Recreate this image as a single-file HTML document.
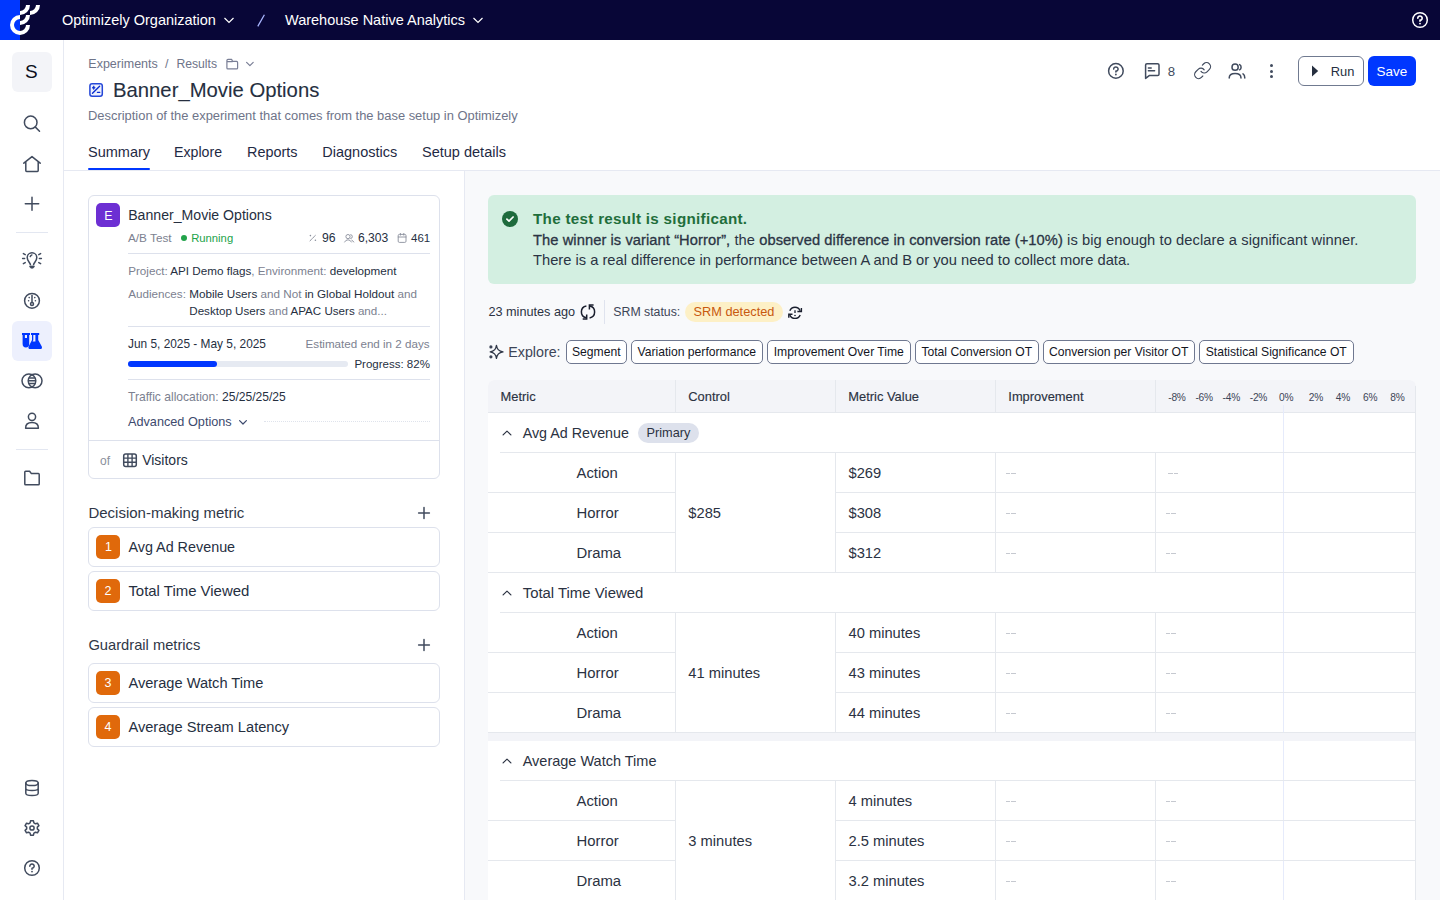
<!DOCTYPE html>
<html><head><meta charset="utf-8">
<style>
*{box-sizing:border-box;margin:0;padding:0}
html,body{width:1440px;height:900px;overflow:hidden;background:#fff}
body{font-family:"Liberation Sans",sans-serif;color:#262f3f;position:relative}
.a{position:absolute}
.nw{white-space:nowrap}
svg{display:block;overflow:visible}
.i{stroke:#414b5e;stroke-width:1.5;fill:none;stroke-linecap:round;stroke-linejoin:round}
</style></head><body>
<div class="a" style="left:465px;top:171px;width:975px;height:729px;background:#f8f9fb"></div>
<div class="a" style="left:64px;top:170px;width:1376px;height:1px;background:#e6e9f2"></div>
<div class="a" style="left:464px;top:171px;width:1px;height:729px;background:#e6e9f2"></div>
<div class="a" style="left:63px;top:40px;width:1px;height:860px;background:#e6e9f2"></div>
<div class="a" style="left:0px;top:0px;width:1440px;height:40px;background:#080637"></div>
<div class="a" style="left:0px;top:0px;width:20px;height:40px;background:#0037ff"></div>
<svg class="a" style="left:0px;top:0px" width="45" height="40" viewBox="0 0 45 40"><g stroke="#fff" stroke-width="4" fill="none"><path d="M20,17 A8,8 0 1,0 28,25"/><path d="M20,23 A8,8 0 0,0 28,15"/><path d="M20,13 A8,8 0 0,0 28,5"/><path d="M30,13 A8,8 0 0,0 38,5"/></g></svg>
<div class="a nw" style="left:62px;top:13px;font-size:14.5px;line-height:14.5px;color:#fff;font-weight:400;letter-spacing:0px;">Optimizely Organization</div>
<svg class="a" style="left:223px;top:15px" width="12" height="10" viewBox="0 0 12 10"><path d="M1.5,3 L6,7.5 L10.5,3" stroke="#fff" stroke-width="1.2" fill="none"/></svg>
<svg class="a" style="left:256px;top:12px" width="10" height="16" viewBox="0 0 10 16"><path d="M8.4,2.7 L1.8,14.4" stroke="#a9b6ff" stroke-width="1.3" fill="none"/></svg>
<div class="a nw" style="left:285px;top:13px;font-size:14.5px;line-height:14.5px;color:#fff;font-weight:400;letter-spacing:0px;">Warehouse Native Analytics</div>
<svg class="a" style="left:472px;top:15px" width="12" height="10" viewBox="0 0 12 10"><path d="M1.5,3 L6,7.5 L10.5,3" stroke="#fff" stroke-width="1.2" fill="none"/></svg>
<svg class="a" style="left:1411px;top:11px" width="18" height="18" viewBox="0 0 18 18"><circle cx="9" cy="9" r="7.3" stroke="#fff" stroke-width="1.5" fill="none"/><path d="M6.8,7.2 A2.2,2.1 0 1,1 9,9.2 L9,10.2" stroke="#fff" stroke-width="1.6" fill="none" stroke-linecap="round"/><circle cx="9" cy="12.6" r="0.95" fill="#fff"/></svg>
<div class="a" style="left:12px;top:52px;width:40px;height:40px;background:#f3f4f8;border-radius:6px"></div>
<div class="a nw" style="left:25px;top:62px;font-size:19px;line-height:19px;color:#0b0f1c;font-weight:400;letter-spacing:0px;">S</div>
<svg class="a" style="left:0px;top:100px" width="64" height="40" viewBox="0 0 64 40"><circle cx="30.7" cy="22.4" r="6.3" class="i"/><path d="M35.4,27.1 L39.5,31.2" class="i"/></svg>
<svg class="a" style="left:0px;top:150px" width="64" height="30" viewBox="0 0 64 30"><path d="M23.8,13.2 L32,6.6 L40.2,13.2 M25.8,11.4 L25.8,20.6 Q25.8,21.4 26.6,21.4 L37.4,21.4 Q38.2,21.4 38.2,20.6 L38.2,11.4" class="i"/></svg>
<svg class="a" style="left:0px;top:190px" width="64" height="30" viewBox="0 0 64 30"><path d="M32,7.3 L32,20.3 M25.3,13.8 L38.7,13.8" class="i"/></svg>
<div class="a" style="left:16px;top:232px;width:32px;height:1px;background:#e3e7f1"></div>
<svg class="a" style="left:0px;top:245px" width="64" height="30" viewBox="0 0 64 30"><path d="M30.4,19.6 C30.2,17.6 27.2,16.2 27.2,12.6 A4.8,4.8 0 0 1 36.8,12.6 C36.8,16.2 33.8,17.6 33.6,19.6" class="i"/><path d="M29.6,21 L34.4,21 Q34.2,23.3 32,23.3 Q29.8,23.3 29.6,21 Z" fill="#414b5e" stroke="#414b5e" stroke-width="0.8" stroke-linejoin="round"/><path d="M30.3,11.6 Q30.8,10.3 31.9,9.9" class="i" stroke-width="1"/><path d="M22.6,13.6 L24.6,13.6 M39.4,13.6 L41.4,13.6 M23.4,8.6 L25.2,9.6 M40.6,8.6 L38.8,9.6 M23.4,18.6 L25.2,17.6 M40.6,18.6 L38.8,17.6" class="i"/></svg>
<svg class="a" style="left:0px;top:285px" width="64" height="30" viewBox="0 0 64 30"><circle cx="32" cy="15.8" r="7.4" class="i"/><path d="M32,10.6 L32,17.4" class="i"/><circle cx="32" cy="19" r="1.5" class="i" stroke-width="1.3"/><circle cx="28.6" cy="15.8" r="0.8" fill="#414b5e"/><circle cx="35.4" cy="15.8" r="0.8" fill="#414b5e"/><circle cx="29.2" cy="12.6" r="0.8" fill="#414b5e"/><circle cx="34.8" cy="12.6" r="0.8" fill="#414b5e"/></svg>
<div class="a" style="left:12px;top:321px;width:40px;height:40px;background:#edf0fd;border-radius:6px"></div>
<svg class="a" style="left:0px;top:321px" width="64" height="40" viewBox="0 0 64 40"><g fill="#0037ff"><rect x="22" y="12" width="8" height="2"/><path d="M22.6,13 L29.2,13 L29.2,23 Q29.2,26.4 25.9,26.4 Q22.6,26.4 22.6,23 Z"/><rect x="31" y="12" width="8.2" height="2"/><path d="M32,13 L38.2,13 L38.2,19 L41.8,25.4 Q42.6,28 40,28 L30.4,28 Q27.8,28 28.6,25.4 L32,19 Z"/></g><g fill="#edf0fd"><rect x="24.9" y="14" width="2.1" height="3"/><path d="M33.3,14 L35.4,14 L35.4,20.6 L32.6,20.6 L33.3,19.2 Z"/></g></svg>
<svg class="a" style="left:0px;top:366px" width="64" height="30" viewBox="0 0 64 30"><circle cx="28.9" cy="14.8" r="6.9" class="i"/><circle cx="35.1" cy="14.8" r="6.9" class="i"/><path d="M29.6,12 L34.4,12 M29.2,14.8 L34.8,14.8 M29.6,17.6 L34.4,17.6" class="i" stroke-width="1.3"/></svg>
<svg class="a" style="left:0px;top:405px" width="64" height="30" viewBox="0 0 64 30"><circle cx="32" cy="11.8" r="3.6" class="i"/><path d="M25.6,23.2 Q25.6,17.6 32,17.6 Q38.4,17.6 38.4,23.2 Z" class="i"/></svg>
<div class="a" style="left:16px;top:449px;width:32px;height:1px;background:#e3e7f1"></div>
<svg class="a" style="left:0px;top:462px" width="64" height="30" viewBox="0 0 64 30"><path d="M24.8,10 Q24.8,9.2 25.6,9.2 L29.6,9.2 L31.4,11.6 L38.4,11.6 Q39.2,11.6 39.2,12.4 L39.2,22 Q39.2,22.8 38.4,22.8 L25.6,22.8 Q24.8,22.8 24.8,22 Z" class="i"/></svg>
<svg class="a" style="left:0px;top:770px" width="64" height="30" viewBox="0 0 64 30"><ellipse cx="32" cy="13" rx="6.2" ry="2.6" class="i"/><path d="M25.8,13 L25.8,23.2 Q25.8,25.5 32,25.5 Q38.2,25.5 38.2,23.2 L38.2,13 M25.8,18.3 Q25.8,20.6 32,20.6 Q38.2,20.6 38.2,18.3" class="i"/></svg>
<svg class="a" style="left:0px;top:813px" width="64" height="30" viewBox="0 0 64 30"><path d="M30.10,9.95 L30.55,7.85 L33.45,7.85 L33.90,9.95 L35.43,10.83 L37.47,10.17 L38.92,12.68 L37.33,14.12 L37.33,15.88 L38.92,17.32 L37.47,19.83 L35.43,19.17 L33.90,20.05 L33.45,22.15 L30.55,22.15 L30.10,20.05 L28.57,19.17 L26.53,19.83 L25.08,17.32 L26.67,15.88 L26.67,14.12 L25.08,12.68 L26.53,10.17 L28.57,10.83Z" class="i" stroke-width="1.4"/><circle cx="32" cy="15" r="2.1" class="i"/></svg>
<svg class="a" style="left:0px;top:853px" width="64" height="30" viewBox="0 0 64 30"><circle cx="32" cy="15" r="7.3" class="i"/><path d="M29.8,13.2 A2.2,2.1 0 1,1 32,15.2 L32,16.2" class="i"/><circle cx="32" cy="18.6" r="0.9" fill="#414b5e"/></svg>
<div class="a nw" style="left:88.3px;top:58px;font-size:12.5px;line-height:12.5px;color:#6e7489;font-weight:400;letter-spacing:0px;">Experiments</div>
<div class="a nw" style="left:165px;top:58px;font-size:12.5px;line-height:12.5px;color:#6e7489;font-weight:400;letter-spacing:0px;">/</div>
<div class="a nw" style="left:176.4px;top:58px;font-size:12.2px;line-height:12.2px;color:#6e7489;font-weight:400;letter-spacing:0px;">Results</div>
<svg class="a" style="left:224px;top:56px" width="16" height="16" viewBox="0 0 16 16"><path d="M2.9,4.4 Q2.9,3.3 4,3.3 L7.6,3.3 L8.6,5.4 L12.6,5.4 Q13.6,5.4 13.6,6.4 L13.6,11.9 Q13.6,12.9 12.6,12.9 L3.9,12.9 Q2.9,12.9 2.9,11.9 Z M2.9,5.6 L8.6,5.6" stroke="#7a7f96" stroke-width="1.2" fill="none" stroke-linejoin="round"/></svg>
<svg class="a" style="left:244px;top:56px" width="12" height="12" viewBox="0 0 12 12"><path d="M2.6,6.3 L5.9,9.6 L9.2,6.3" stroke="#7a7f96" stroke-width="1.2" fill="none" stroke-linecap="round" stroke-linejoin="round"/></svg>
<svg class="a" style="left:88px;top:82px" width="16" height="16" viewBox="0 0 16 16"><rect x="1.9" y="1.75" width="12.4" height="12.4" rx="2.2" fill="#eef1fd" stroke="#2547d8" stroke-width="1.5"/><path d="M4.5,11.3 L11.6,4.3" stroke="#0a2fd0" stroke-width="1.4" stroke-linecap="round"/><path d="M9.4,10.3 L11.8,10.3" stroke="#0a2fd0" stroke-width="1.3" stroke-linecap="round"/><path d="M5.7,3.8 Q6,5.4 7.3,5.7 Q6,6 5.7,7.6 Q5.4,6 4.1,5.7 Q5.4,5.4 5.7,3.8 Z" fill="#0a2fd0" stroke="#0a2fd0" stroke-width="0.6" stroke-linejoin="round"/></svg>
<div class="a nw" style="left:113px;top:80px;font-size:20.3px;line-height:20.3px;color:#262f3f;font-weight:400;letter-spacing:0px;-webkit-text-stroke:0.1px #262f3f;">Banner_Movie Options</div>
<div class="a nw" style="left:88px;top:110px;font-size:12.92px;line-height:12.92px;color:#6e7489;font-weight:400;letter-spacing:0px;">Description of the experiment that comes from the base setup in Optimizely</div>
<div class="a nw" style="left:88px;top:145px;font-size:14.5px;line-height:14.5px;color:#1f2a44;font-weight:400;letter-spacing:0px;">Summary</div>
<div class="a nw" style="left:174px;top:145px;font-size:14.16px;line-height:14.16px;color:#1f2a44;font-weight:400;letter-spacing:0px;">Explore</div>
<div class="a nw" style="left:247px;top:145px;font-size:14.42px;line-height:14.42px;color:#1f2a44;font-weight:400;letter-spacing:0px;">Reports</div>
<div class="a nw" style="left:322.3px;top:145px;font-size:14.5px;line-height:14.5px;color:#1f2a44;font-weight:400;letter-spacing:0px;">Diagnostics</div>
<div class="a nw" style="left:422px;top:145px;font-size:14.53px;line-height:14.53px;color:#1f2a44;font-weight:400;letter-spacing:0px;">Setup details</div>
<div class="a" style="left:88px;top:168px;width:62px;height:2px;background:#0037ff;border-radius:1px"></div>
<svg class="a" style="left:1106px;top:61px" width="20" height="20" viewBox="0 0 20 20"><circle cx="9.9" cy="9.9" r="7.3" class="i"/><path d="M7.7,8.1 A2.2,2.1 0 1,1 9.9,10.1 L9.9,11.1" class="i"/><circle cx="9.9" cy="13.5" r="0.9" fill="#414b5e"/></svg>
<svg class="a" style="left:1140px;top:58px" width="24" height="24" viewBox="0 0 24 24"><path d="M5.6,7.1 Q5.6,5.7 7,5.7 L17.6,5.7 Q19,5.7 19,7.1 L19,16.2 Q19,17.6 17.6,17.6 L9.2,17.6 L5.6,20.4 Z" class="i"/><path d="M8.4,9.9 L11.2,9.9 M8.4,12.8 L14.6,12.8" class="i" stroke-width="1.3"/></svg>
<div class="a nw" style="left:1167.8px;top:65px;font-size:13.2px;line-height:13.2px;color:#414b5e;font-weight:400;letter-spacing:0px;">8</div>
<svg class="a" style="left:1193.4px;top:61.4px" width="19.2" height="19.2" viewBox="0 0 24 24"><path d="M10 13a5 5 0 0 0 7.54.54l3-3a5 5 0 0 0-7.07-7.07l-1.72 1.71" class="i" stroke-width="1.9"/><path d="M14 11a5 5 0 0 0-7.54-.54l-3 3a5 5 0 0 0 7.07 7.07l1.71-1.71" class="i" stroke-width="1.9"/></svg>
<svg class="a" style="left:1226px;top:61px" width="22" height="20" viewBox="0 0 22 20"><circle cx="9.1" cy="6.2" r="3.1" class="i"/><path d="M3.2,17 Q3.2,12.6 9.1,12.6 Q15,12.6 15,17" class="i"/><path d="M13.6,3.6 A3,3 0 0 1 13.6,8.8" class="i"/><path d="M17,12.9 Q18.8,14 18.8,17" class="i"/></svg>
<div class="a" style="left:1269.5px;top:64.1px;width:3px;height:3px;border-radius:50%;background:#414b5e"></div>
<div class="a" style="left:1269.5px;top:69.5px;width:3px;height:3px;border-radius:50%;background:#414b5e"></div>
<div class="a" style="left:1269.5px;top:74.9px;width:3px;height:3px;border-radius:50%;background:#414b5e"></div>
<div class="a" style="left:1298px;top:56px;width:66px;height:30px;border:1px solid #707a90;border-radius:6px;background:#fff"></div>
<svg class="a" style="left:1310px;top:64px" width="10" height="14" viewBox="0 0 10 14"><path d="M2,1.6 L8.2,7 L2,12.4 Z" fill="#262f3f"/></svg>
<div class="a nw" style="left:1330.8px;top:66px;font-size:12.9px;line-height:12.9px;color:#262f3f;font-weight:400;letter-spacing:0px;">Run</div>
<div class="a" style="left:1368px;top:56px;width:48px;height:30px;background:#0037ff;border-radius:6px"></div>
<div class="a nw" style="left:1376.5px;top:65px;font-size:13.5px;line-height:13.5px;color:#fff;font-weight:400;letter-spacing:0px;">Save</div>
<div class="a" style="left:88px;top:195px;width:352px;height:284px;border:1px solid #dde1ec;border-radius:6px;background:#fff"></div>
<div class="a" style="left:96px;top:203px;width:24px;height:24px;background:#6d2fd3;border-radius:5px"></div>
<div class="a nw" style="left:104.2px;top:210px;font-size:12.5px;line-height:12.5px;color:#fff;font-weight:400;letter-spacing:0px;">E</div>
<div class="a nw" style="left:128.2px;top:208px;font-size:14.12px;line-height:14.12px;color:#262f3f;font-weight:400;letter-spacing:0px;">Banner_Movie Options</div>
<div class="a nw" style="left:128px;top:232px;font-size:11.77px;line-height:11.77px;color:#7c8190;font-weight:400;letter-spacing:0px;">A/B Test</div>
<div class="a" style="left:181.2px;top:235px;width:6px;height:6px;border-radius:50%;background:#22a34a"></div>
<div class="a nw" style="left:191.2px;top:233px;font-size:11.27px;line-height:11.27px;color:#22a34a;font-weight:400;letter-spacing:0px;">Running</div>
<svg class="a" style="left:306px;top:231px" width="14" height="14" viewBox="0 0 14 14"><path d="M4,9.8 L9.8,4" stroke="#8a8f9c" stroke-width="1" stroke-linecap="round" stroke-dasharray="1.2 0.9"/><circle cx="4.4" cy="4.6" r="0.8" fill="#8a8f9c"/><circle cx="9.4" cy="9.3" r="0.8" fill="#8a8f9c"/></svg>
<div class="a nw" style="left:322px;top:232px;font-size:12.2px;line-height:12.2px;color:#262f3f;font-weight:400;letter-spacing:0px;">96</div>
<svg class="a" style="left:342px;top:231px" width="14" height="14" viewBox="0 0 14 14"><circle cx="6" cy="5.6" r="2.1" stroke="#8a8f9c" stroke-width="0.9" fill="none"/><path d="M8.3,3.6 A2,2 0 0 1 8.3,7.6" stroke="#8a8f9c" stroke-width="0.9" fill="none"/><path d="M2.6,11 Q3.6,8.8 6,8.8 Q8.4,8.8 9.4,11 M9.8,9.2 Q11.2,9.8 11.8,11" stroke="#8a8f9c" stroke-width="0.9" fill="none" stroke-linecap="round"/></svg>
<div class="a nw" style="left:358px;top:232px;font-size:12.11px;line-height:12.11px;color:#262f3f;font-weight:400;letter-spacing:0px;">6,303</div>
<svg class="a" style="left:396px;top:231px" width="12" height="14" viewBox="0 0 12 14"><rect x="2.2" y="3.4" width="7.8" height="8" rx="1.2" stroke="#8a8f9c" stroke-width="0.9" fill="none"/><path d="M2.2,6 L10,6 M4.4,2.4 L4.4,4.2 M7.8,2.4 L7.8,4.2" stroke="#8a8f9c" stroke-width="0.9" fill="none" stroke-linecap="round"/></svg>
<div class="a nw" style="left:411px;top:233px;font-size:11.5px;line-height:11.5px;color:#262f3f;font-weight:400;letter-spacing:0px;">461</div>
<div class="a" style="left:128px;top:253px;width:302px;height:1px;background:#dde1ec"></div>
<div class="a nw" style="left:128.2px;top:265px;font-size:11.67px;line-height:11.67px;color:#262f3f;font-weight:400;letter-spacing:0px;"><span style="color:#7c8190">Project: </span>API Demo flags<span style="color:#7c8190">, Environment: </span>development</div>
<div class="a nw" style="left:128.2px;top:288px;font-size:11.68px;line-height:11.68px;color:#262f3f;font-weight:400;letter-spacing:0px;"><span style="color:#7c8190">Audiences: </span>Mobile Users<span style="color:#7c8190"> and Not </span>in Global Holdout<span style="color:#7c8190"> and</span></div>
<div class="a nw" style="left:189.3px;top:305px;font-size:11.6px;line-height:11.6px;color:#262f3f;font-weight:400;letter-spacing:0px;">Desktop Users<span style="color:#7c8190"> and </span>APAC Users<span style="color:#7c8190"> and...</span></div>
<div class="a" style="left:128px;top:326px;width:302px;height:1px;background:#dde1ec"></div>
<div class="a nw" style="left:128px;top:339px;font-size:11.88px;line-height:11.88px;color:#262f3f;font-weight:400;letter-spacing:0px;">Jun 5, 2025 - May 5, 2025</div>
<div class="a nw" style="left:305.6px;top:338px;font-size:11.62px;line-height:11.62px;color:#7c8190;font-weight:400;letter-spacing:0px;">Estimated end in 2 days</div>
<div class="a" style="left:128px;top:361px;width:220px;height:6px;background:#e6eaf2;border-radius:3px"></div>
<div class="a" style="left:128px;top:361px;width:89px;height:6px;background:#0037ff;border-radius:3px"></div>
<div class="a nw" style="left:354.4px;top:359px;font-size:11.53px;line-height:11.53px;color:#262f3f;font-weight:400;letter-spacing:0px;">Progress: 82%</div>
<div class="a" style="left:128px;top:379px;width:302px;height:1px;background:#dde1ec"></div>
<div class="a nw" style="left:128px;top:391px;font-size:12.09px;line-height:12.09px;color:#262f3f;font-weight:400;letter-spacing:0px;"><span style="color:#7c8190">Traffic allocation: </span>25/25/25/25</div>
<div class="a nw" style="left:128px;top:416px;font-size:12.7px;line-height:12.7px;color:#3d4a6e;font-weight:400;letter-spacing:0px;">Advanced Options</div>
<svg class="a" style="left:236px;top:416px" width="14" height="12" viewBox="0 0 14 12"><path d="M3.6,4.6 L7,8 L10.4,4.6" stroke="#3d4a6e" stroke-width="1.2" fill="none" stroke-linecap="round" stroke-linejoin="round"/></svg>
<div class="a" style="left:264px;top:421px;width:166px;height:1px;border-top:1px dotted #dfe3ec"></div>
<div class="a" style="left:89px;top:440px;width:350px;height:1px;background:#dde1ec"></div>
<div class="a nw" style="left:100px;top:455px;font-size:12px;line-height:12px;color:#8a8f9c;font-weight:400;letter-spacing:0px;">of</div>
<svg class="a" style="left:120px;top:450px" width="20" height="20" viewBox="0 0 20 20"><rect x="3.7" y="3.9" width="12.6" height="12.6" rx="2" stroke="#414b5e" stroke-width="1.5" fill="none"/><path d="M3.7,8.1 L16.3,8.1 M3.7,12.3 L16.3,12.3 M7.9,3.9 L7.9,16.5 M12.1,3.9 L12.1,16.5" stroke="#414b5e" stroke-width="1.4" fill="none"/></svg>
<div class="a nw" style="left:142.2px;top:453px;font-size:13.99px;line-height:13.99px;color:#262f3f;font-weight:400;letter-spacing:0px;">Visitors</div>
<div class="a nw" style="left:88.4px;top:505px;font-size:15.0px;line-height:15.0px;color:#2f3747;font-weight:400;letter-spacing:0px;">Decision-making metric</div>
<svg class="a" style="left:416px;top:505px" width="16" height="16" viewBox="0 0 16 16"><path d="M8,2.6 L8,13.4 M2.6,8 L13.4,8" class="i"/></svg>
<div class="a" style="left:88px;top:527px;width:352px;height:40px;border:1px solid #dde1ec;border-radius:6px;background:#fff"></div>
<div class="a" style="left:96px;top:535px;width:24px;height:24px;background:#e0690b;border-radius:5px"></div>
<div class="a nw" style="left:104.89999999999999px;top:541px;font-size:12.5px;line-height:12.5px;color:#fff;font-weight:400;letter-spacing:0px;">1</div>
<div class="a nw" style="left:128.4px;top:540px;font-size:14.36px;line-height:14.36px;color:#262f3f;font-weight:400;letter-spacing:0px;">Avg Ad Revenue</div>
<div class="a" style="left:88px;top:571px;width:352px;height:40px;border:1px solid #dde1ec;border-radius:6px;background:#fff"></div>
<div class="a" style="left:96px;top:579px;width:24px;height:24px;background:#e0690b;border-radius:5px"></div>
<div class="a nw" style="left:104.6px;top:585px;font-size:12.5px;line-height:12.5px;color:#fff;font-weight:400;letter-spacing:0px;">2</div>
<div class="a nw" style="left:128.4px;top:584px;font-size:14.94px;line-height:14.94px;color:#262f3f;font-weight:400;letter-spacing:0px;">Total Time Viewed</div>
<div class="a nw" style="left:88.4px;top:638px;font-size:14.71px;line-height:14.71px;color:#2f3747;font-weight:400;letter-spacing:0px;">Guardrail metrics</div>
<svg class="a" style="left:416px;top:637px" width="16" height="16" viewBox="0 0 16 16"><path d="M8,2.6 L8,13.4 M2.6,8 L13.4,8" class="i"/></svg>
<div class="a" style="left:88px;top:663px;width:352px;height:40px;border:1px solid #dde1ec;border-radius:6px;background:#fff"></div>
<div class="a" style="left:96px;top:671px;width:24px;height:24px;background:#e0690b;border-radius:5px"></div>
<div class="a nw" style="left:104.6px;top:677px;font-size:12.5px;line-height:12.5px;color:#fff;font-weight:400;letter-spacing:0px;">3</div>
<div class="a nw" style="left:128.4px;top:676px;font-size:14.63px;line-height:14.63px;color:#262f3f;font-weight:400;letter-spacing:0px;">Average Watch Time</div>
<div class="a" style="left:88px;top:707px;width:352px;height:40px;border:1px solid #dde1ec;border-radius:6px;background:#fff"></div>
<div class="a" style="left:96px;top:715px;width:24px;height:24px;background:#e0690b;border-radius:5px"></div>
<div class="a nw" style="left:104.6px;top:721px;font-size:12.5px;line-height:12.5px;color:#fff;font-weight:400;letter-spacing:0px;">4</div>
<div class="a nw" style="left:128.4px;top:720px;font-size:14.63px;line-height:14.63px;color:#262f3f;font-weight:400;letter-spacing:0px;">Average Stream Latency</div>
<div class="a" style="left:488px;top:195px;width:928px;height:89px;background:#d3efe1;border-radius:6px"></div>
<svg class="a" style="left:502px;top:211px" width="16" height="16" viewBox="0 0 16 16"><circle cx="8" cy="8" r="8" fill="#1e6b3d"/><path d="M4.9,8.2 L7,10.2 L11.1,6" stroke="#fff" stroke-width="1.7" fill="none" stroke-linecap="round" stroke-linejoin="round"/></svg>
<div class="a nw" style="left:533px;top:211px;font-size:15.2px;line-height:15.2px;color:#1f6e3b;font-weight:700;letter-spacing:0.3px;">The test result is significant.</div>
<div class="a nw" style="left:533px;top:233px;font-size:14.7px;line-height:14.7px;color:#2b3444;font-weight:400;letter-spacing:0.07px;"><span style="-webkit-text-stroke:0.3px #2b3444">The winner is variant “Horror”,</span> the <span style="-webkit-text-stroke:0.3px #2b3444">observed difference in conversion rate (+10%)</span> is big enough to declare a significant winner.</div>
<div class="a nw" style="left:533px;top:253px;font-size:14.71px;line-height:14.71px;color:#2b3444;font-weight:400;letter-spacing:0px;">There is a real difference in performance between A and B or you need to collect more data.</div>
<div class="a nw" style="left:488.4px;top:306px;font-size:12.69px;line-height:12.69px;color:#2b3242;font-weight:400;letter-spacing:0px;">23 minutes ago</div>
<svg class="a" style="left:580px;top:304px" width="16" height="16" viewBox="0 0 16 16"><path d="M6.4,2 A6,6 0 0 0 6.2,13.8 M9.6,13.9 A6,6 0 0 0 9.8,2.1" stroke="#1a1f2e" stroke-width="1.5" fill="none"/><path d="M2.7,14.9 L6.7,14.9 L6.7,10.6 M13.6,1 L9.4,1 L9.4,5.6" stroke="#1a1f2e" stroke-width="1.5" fill="none"/></svg>
<div class="a" style="left:604px;top:300px;width:1px;height:24px;background:#dfe3ee"></div>
<div class="a nw" style="left:613.3px;top:306px;font-size:12.3px;line-height:12.3px;color:#3d4557;font-weight:400;letter-spacing:0px;">SRM status:</div>
<div class="a" style="left:685px;top:302px;width:98px;height:20px;background:#fdf0c6;border-radius:10px"></div>
<div class="a nw" style="left:693.5px;top:306px;font-size:12.78px;line-height:12.78px;color:#c8590f;font-weight:400;letter-spacing:0px;">SRM detected</div>
<svg class="a" style="left:787px;top:304.5px" width="16" height="16" viewBox="0 0 16 16"><path d="M2.81,5.7 A5.6,5.6 0 0 1 13.19,5.7 M13.19,9.9 A5.6,5.6 0 0 1 2.81,9.9" stroke="#1a1f2e" stroke-width="1.4" fill="none"/><path d="M14.4,3 L14.4,6.5 L10.4,6.5 M1.8,12.7 L1.8,9.3 L5.5,9.3" stroke="#1a1f2e" stroke-width="1.4" fill="none"/><path d="M8,5.2 L8,8" stroke="#1a1f2e" stroke-width="1.3"/><circle cx="8" cy="10.5" r="0.8" fill="#1a1f2e"/></svg>
<svg class="a" style="left:486px;top:342px" width="20" height="20" viewBox="0 0 20 20"><path d="M10.45,3.3 Q11.2,9.1 17,9.85 Q11.2,10.6 10.45,16.4 Q9.7,10.6 4.2,9.85 Q9.7,9.1 10.45,3.3 Z" stroke="#2f3747" stroke-width="1.3" fill="none" stroke-linejoin="round"/><circle cx="4.9" cy="4.9" r="1.6" fill="#3d4557"/><circle cx="4.9" cy="14.8" r="1.6" fill="#3d4557"/></svg>
<div class="a nw" style="left:508.3px;top:345px;font-size:14.26px;line-height:14.26px;color:#3d4557;font-weight:400;letter-spacing:0px;">Explore:</div>
<div class="a" style="left:566px;top:340px;width:60.5px;height:24px;border:1px solid #6f7890;border-radius:5px;background:#fff"></div>
<div class="a nw" style="left:566px;top:346px;width:60.5px;text-align:center;font-size:12.15px;line-height:12.2px;color:#14161f">Segment</div>
<div class="a" style="left:631px;top:340px;width:131.5px;height:24px;border:1px solid #6f7890;border-radius:5px;background:#fff"></div>
<div class="a nw" style="left:631px;top:346px;width:131.5px;text-align:center;font-size:12.15px;line-height:12.2px;color:#14161f">Variation performance</div>
<div class="a" style="left:767px;top:340px;width:143.5px;height:24px;border:1px solid #6f7890;border-radius:5px;background:#fff"></div>
<div class="a nw" style="left:767px;top:346px;width:143.5px;text-align:center;font-size:12.15px;line-height:12.2px;color:#14161f">Improvement Over Time</div>
<div class="a" style="left:915px;top:340px;width:123.5px;height:24px;border:1px solid #6f7890;border-radius:5px;background:#fff"></div>
<div class="a nw" style="left:915px;top:346px;width:123.5px;text-align:center;font-size:12.15px;line-height:12.2px;color:#14161f">Total Conversion OT</div>
<div class="a" style="left:1043px;top:340px;width:151.5px;height:24px;border:1px solid #6f7890;border-radius:5px;background:#fff"></div>
<div class="a nw" style="left:1043px;top:346px;width:151.5px;text-align:center;font-size:12.15px;line-height:12.2px;color:#14161f">Conversion per Visitor OT</div>
<div class="a" style="left:1199px;top:340px;width:154.5px;height:24px;border:1px solid #6f7890;border-radius:5px;background:#fff"></div>
<div class="a nw" style="left:1199px;top:346px;width:154.5px;text-align:center;font-size:12.15px;line-height:12.2px;color:#14161f">Statistical Significance OT</div>
<div class="a" style="left:488px;top:380px;width:928px;height:520px;background:#fff;border-radius:6px 6px 0 0"></div>
<div class="a" style="left:488px;top:380px;width:928px;height:32px;background:#f3f4f8;border-radius:6px 6px 0 0"></div>
<div class="a" style="left:488px;top:412px;width:928px;height:1px;background:#e5e8ed"></div>
<div class="a" style="left:1415px;top:386px;width:1px;height:514px;background:#e5e8ed"></div>
<div class="a" style="left:675px;top:380px;width:1px;height:32px;background:#e5e8ed"></div>
<div class="a" style="left:835px;top:380px;width:1px;height:32px;background:#e5e8ed"></div>
<div class="a" style="left:995px;top:380px;width:1px;height:32px;background:#e5e8ed"></div>
<div class="a" style="left:1155px;top:380px;width:1px;height:32px;background:#e5e8ed"></div>
<div class="a nw" style="left:500.5px;top:391px;font-size:12.9px;line-height:12.9px;color:#2b3242;font-weight:400;letter-spacing:0px;-webkit-text-stroke:0.15px #2b3242">Metric</div>
<div class="a nw" style="left:688.3px;top:391px;font-size:12.9px;line-height:12.9px;color:#2b3242;font-weight:400;letter-spacing:0px;-webkit-text-stroke:0.15px #2b3242">Control</div>
<div class="a nw" style="left:848.3px;top:391px;font-size:12.9px;line-height:12.9px;color:#2b3242;font-weight:400;letter-spacing:0px;-webkit-text-stroke:0.15px #2b3242">Metric Value</div>
<div class="a nw" style="left:1008.3px;top:391px;font-size:12.9px;line-height:12.9px;color:#2b3242;font-weight:400;letter-spacing:0px;-webkit-text-stroke:0.15px #2b3242">Improvement</div>
<div class="a nw" style="left:1168.2px;top:393px;font-size:10.2px;line-height:10.2px;color:#3d4557;font-weight:400;letter-spacing:-0.2px;">-8%</div>
<div class="a nw" style="left:1195.4px;top:393px;font-size:10.2px;line-height:10.2px;color:#3d4557;font-weight:400;letter-spacing:-0.2px;">-6%</div>
<div class="a nw" style="left:1222.6px;top:393px;font-size:10.2px;line-height:10.2px;color:#3d4557;font-weight:400;letter-spacing:-0.2px;">-4%</div>
<div class="a nw" style="left:1249.7px;top:393px;font-size:10.2px;line-height:10.2px;color:#3d4557;font-weight:400;letter-spacing:-0.2px;">-2%</div>
<div class="a nw" style="left:1279px;top:393px;font-size:10.2px;line-height:10.2px;color:#3d4557;font-weight:400;letter-spacing:-0.2px;">0%</div>
<div class="a nw" style="left:1308.7px;top:393px;font-size:10.2px;line-height:10.2px;color:#3d4557;font-weight:400;letter-spacing:-0.2px;">2%</div>
<div class="a nw" style="left:1335.7px;top:393px;font-size:10.2px;line-height:10.2px;color:#3d4557;font-weight:400;letter-spacing:-0.2px;">4%</div>
<div class="a nw" style="left:1363.1px;top:393px;font-size:10.2px;line-height:10.2px;color:#3d4557;font-weight:400;letter-spacing:-0.2px;">6%</div>
<div class="a nw" style="left:1390.3px;top:393px;font-size:10.2px;line-height:10.2px;color:#3d4557;font-weight:400;letter-spacing:-0.2px;">8%</div>
<div class="a" style="left:1283px;top:405px;width:1px;height:495px;background:#e6ebfb"></div>
<svg class="a" style="left:500px;top:426px" width="14" height="14" viewBox="0 0 14 14"><path d="M3.1,8.9 L7,5.1 L10.9,8.9" stroke="#2b3242" stroke-width="1.2" fill="none" stroke-linecap="round" stroke-linejoin="round"/></svg>
<div class="a nw" style="left:522.7px;top:426px;font-size:14.3px;line-height:14.3px;color:#2b3242;font-weight:400;letter-spacing:0px;">Avg Ad Revenue</div>
<div class="a" style="left:638px;top:423px;width:61px;height:20px;background:#dde1ec;border-radius:10px"></div>
<div class="a nw" style="left:646.5px;top:427px;font-size:12.72px;line-height:12.72px;color:#2b3242;font-weight:400;letter-spacing:0px;">Primary</div>
<div class="a" style="left:500px;top:452px;width:915px;height:1px;background:#e5e8ed"></div>
<div class="a nw" style="left:576.5px;top:466px;font-size:14.86px;line-height:14.86px;color:#2b3242;font-weight:400;letter-spacing:0px;">Action</div>
<div class="a nw" style="left:848.5px;top:466px;font-size:14.7px;line-height:14.7px;color:#2b3242;font-weight:400;letter-spacing:0px;">$269</div>
<div class="a" style="left:1005.5px;top:473px;width:4.6px;height:1px;background:#c6c9d0"></div>
<div class="a" style="left:1011px;top:473px;width:4.6px;height:1px;background:#c6c9d0"></div>
<div class="a" style="left:1168.2px;top:473px;width:4.6px;height:1px;background:#c6c9d0"></div>
<div class="a" style="left:1173.8px;top:473px;width:4.6px;height:1px;background:#c6c9d0"></div>
<div class="a" style="left:488px;top:492px;width:187px;height:1px;background:#e5e8ed"></div>
<div class="a" style="left:835px;top:492px;width:580px;height:1px;background:#e5e8ed"></div>
<div class="a nw" style="left:576.5px;top:506px;font-size:14.86px;line-height:14.86px;color:#2b3242;font-weight:400;letter-spacing:0px;">Horror</div>
<div class="a nw" style="left:848.5px;top:506px;font-size:14.7px;line-height:14.7px;color:#2b3242;font-weight:400;letter-spacing:0px;">$308</div>
<div class="a" style="left:1005.5px;top:513px;width:4.6px;height:1px;background:#c6c9d0"></div>
<div class="a" style="left:1011px;top:513px;width:4.6px;height:1px;background:#c6c9d0"></div>
<div class="a" style="left:1165.7px;top:513px;width:4.6px;height:1px;background:#c6c9d0"></div>
<div class="a" style="left:1171.3px;top:513px;width:4.6px;height:1px;background:#c6c9d0"></div>
<div class="a" style="left:488px;top:532px;width:187px;height:1px;background:#e5e8ed"></div>
<div class="a" style="left:835px;top:532px;width:580px;height:1px;background:#e5e8ed"></div>
<div class="a nw" style="left:576.5px;top:546px;font-size:14.86px;line-height:14.86px;color:#2b3242;font-weight:400;letter-spacing:0px;">Drama</div>
<div class="a nw" style="left:848.5px;top:546px;font-size:14.7px;line-height:14.7px;color:#2b3242;font-weight:400;letter-spacing:0px;">$312</div>
<div class="a" style="left:1005.5px;top:553px;width:4.6px;height:1px;background:#c6c9d0"></div>
<div class="a" style="left:1011px;top:553px;width:4.6px;height:1px;background:#c6c9d0"></div>
<div class="a" style="left:1165.7px;top:553px;width:4.6px;height:1px;background:#c6c9d0"></div>
<div class="a" style="left:1171.3px;top:553px;width:4.6px;height:1px;background:#c6c9d0"></div>
<div class="a" style="left:488px;top:572px;width:927px;height:1px;background:#e5e8ed"></div>
<div class="a" style="left:675px;top:452px;width:1px;height:120px;background:#e5e8ed"></div>
<div class="a" style="left:835px;top:452px;width:1px;height:120px;background:#e5e8ed"></div>
<div class="a" style="left:995px;top:452px;width:1px;height:120px;background:#e5e8ed"></div>
<div class="a" style="left:1155px;top:452px;width:1px;height:120px;background:#e5e8ed"></div>
<div class="a nw" style="left:688.3px;top:506px;font-size:14.7px;line-height:14.7px;color:#2b3242;font-weight:400;letter-spacing:0px;">$285</div>
<svg class="a" style="left:500px;top:586px" width="14" height="14" viewBox="0 0 14 14"><path d="M3.1,8.9 L7,5.1 L10.9,8.9" stroke="#2b3242" stroke-width="1.2" fill="none" stroke-linecap="round" stroke-linejoin="round"/></svg>
<div class="a nw" style="left:522.7px;top:586px;font-size:14.9px;line-height:14.9px;color:#2b3242;font-weight:400;letter-spacing:0px;">Total Time Viewed</div>
<div class="a" style="left:500px;top:612px;width:915px;height:1px;background:#e5e8ed"></div>
<div class="a nw" style="left:576.5px;top:626px;font-size:14.86px;line-height:14.86px;color:#2b3242;font-weight:400;letter-spacing:0px;">Action</div>
<div class="a nw" style="left:848.5px;top:626px;font-size:14.7px;line-height:14.7px;color:#2b3242;font-weight:400;letter-spacing:0px;">40 minutes</div>
<div class="a" style="left:1005.5px;top:633px;width:4.6px;height:1px;background:#c6c9d0"></div>
<div class="a" style="left:1011px;top:633px;width:4.6px;height:1px;background:#c6c9d0"></div>
<div class="a" style="left:1165.7px;top:633px;width:4.6px;height:1px;background:#c6c9d0"></div>
<div class="a" style="left:1171.3px;top:633px;width:4.6px;height:1px;background:#c6c9d0"></div>
<div class="a" style="left:488px;top:652px;width:187px;height:1px;background:#e5e8ed"></div>
<div class="a" style="left:835px;top:652px;width:580px;height:1px;background:#e5e8ed"></div>
<div class="a nw" style="left:576.5px;top:666px;font-size:14.86px;line-height:14.86px;color:#2b3242;font-weight:400;letter-spacing:0px;">Horror</div>
<div class="a nw" style="left:848.5px;top:666px;font-size:14.7px;line-height:14.7px;color:#2b3242;font-weight:400;letter-spacing:0px;">43 minutes</div>
<div class="a" style="left:1005.5px;top:673px;width:4.6px;height:1px;background:#c6c9d0"></div>
<div class="a" style="left:1011px;top:673px;width:4.6px;height:1px;background:#c6c9d0"></div>
<div class="a" style="left:1165.7px;top:673px;width:4.6px;height:1px;background:#c6c9d0"></div>
<div class="a" style="left:1171.3px;top:673px;width:4.6px;height:1px;background:#c6c9d0"></div>
<div class="a" style="left:488px;top:692px;width:187px;height:1px;background:#e5e8ed"></div>
<div class="a" style="left:835px;top:692px;width:580px;height:1px;background:#e5e8ed"></div>
<div class="a nw" style="left:576.5px;top:706px;font-size:14.86px;line-height:14.86px;color:#2b3242;font-weight:400;letter-spacing:0px;">Drama</div>
<div class="a nw" style="left:848.5px;top:706px;font-size:14.7px;line-height:14.7px;color:#2b3242;font-weight:400;letter-spacing:0px;">44 minutes</div>
<div class="a" style="left:1005.5px;top:713px;width:4.6px;height:1px;background:#c6c9d0"></div>
<div class="a" style="left:1011px;top:713px;width:4.6px;height:1px;background:#c6c9d0"></div>
<div class="a" style="left:1165.7px;top:713px;width:4.6px;height:1px;background:#c6c9d0"></div>
<div class="a" style="left:1171.3px;top:713px;width:4.6px;height:1px;background:#c6c9d0"></div>
<div class="a" style="left:488px;top:732px;width:927px;height:1px;background:#e5e8ed"></div>
<div class="a" style="left:675px;top:612px;width:1px;height:120px;background:#e5e8ed"></div>
<div class="a" style="left:835px;top:612px;width:1px;height:120px;background:#e5e8ed"></div>
<div class="a" style="left:995px;top:612px;width:1px;height:120px;background:#e5e8ed"></div>
<div class="a" style="left:1155px;top:612px;width:1px;height:120px;background:#e5e8ed"></div>
<div class="a nw" style="left:688.3px;top:666px;font-size:14.7px;line-height:14.7px;color:#2b3242;font-weight:400;letter-spacing:0px;">41 minutes</div>
<div class="a" style="left:488px;top:733px;width:927px;height:8px;background:#f3f4f8"></div>
<div class="a" style="left:488px;top:732px;width:927px;height:1px;background:#e5e8ed"></div>
<svg class="a" style="left:500px;top:754px" width="14" height="14" viewBox="0 0 14 14"><path d="M3.1,8.9 L7,5.1 L10.9,8.9" stroke="#2b3242" stroke-width="1.2" fill="none" stroke-linecap="round" stroke-linejoin="round"/></svg>
<div class="a nw" style="left:522.7px;top:754px;font-size:14.5px;line-height:14.5px;color:#2b3242;font-weight:400;letter-spacing:0px;">Average Watch Time</div>
<div class="a" style="left:500px;top:780px;width:915px;height:1px;background:#e5e8ed"></div>
<div class="a nw" style="left:576.5px;top:794px;font-size:14.86px;line-height:14.86px;color:#2b3242;font-weight:400;letter-spacing:0px;">Action</div>
<div class="a nw" style="left:848.5px;top:794px;font-size:14.7px;line-height:14.7px;color:#2b3242;font-weight:400;letter-spacing:0px;">4 minutes</div>
<div class="a" style="left:1005.5px;top:801px;width:4.6px;height:1px;background:#c6c9d0"></div>
<div class="a" style="left:1011px;top:801px;width:4.6px;height:1px;background:#c6c9d0"></div>
<div class="a" style="left:1165.7px;top:801px;width:4.6px;height:1px;background:#c6c9d0"></div>
<div class="a" style="left:1171.3px;top:801px;width:4.6px;height:1px;background:#c6c9d0"></div>
<div class="a" style="left:488px;top:820px;width:187px;height:1px;background:#e5e8ed"></div>
<div class="a" style="left:835px;top:820px;width:580px;height:1px;background:#e5e8ed"></div>
<div class="a nw" style="left:576.5px;top:834px;font-size:14.86px;line-height:14.86px;color:#2b3242;font-weight:400;letter-spacing:0px;">Horror</div>
<div class="a nw" style="left:848.5px;top:834px;font-size:14.7px;line-height:14.7px;color:#2b3242;font-weight:400;letter-spacing:0px;">2.5 minutes</div>
<div class="a" style="left:1005.5px;top:841px;width:4.6px;height:1px;background:#c6c9d0"></div>
<div class="a" style="left:1011px;top:841px;width:4.6px;height:1px;background:#c6c9d0"></div>
<div class="a" style="left:1165.7px;top:841px;width:4.6px;height:1px;background:#c6c9d0"></div>
<div class="a" style="left:1171.3px;top:841px;width:4.6px;height:1px;background:#c6c9d0"></div>
<div class="a" style="left:488px;top:860px;width:187px;height:1px;background:#e5e8ed"></div>
<div class="a" style="left:835px;top:860px;width:580px;height:1px;background:#e5e8ed"></div>
<div class="a nw" style="left:576.5px;top:874px;font-size:14.86px;line-height:14.86px;color:#2b3242;font-weight:400;letter-spacing:0px;">Drama</div>
<div class="a nw" style="left:848.5px;top:874px;font-size:14.7px;line-height:14.7px;color:#2b3242;font-weight:400;letter-spacing:0px;">3.2 minutes</div>
<div class="a" style="left:1005.5px;top:881px;width:4.6px;height:1px;background:#c6c9d0"></div>
<div class="a" style="left:1011px;top:881px;width:4.6px;height:1px;background:#c6c9d0"></div>
<div class="a" style="left:1165.7px;top:881px;width:4.6px;height:1px;background:#c6c9d0"></div>
<div class="a" style="left:1171.3px;top:881px;width:4.6px;height:1px;background:#c6c9d0"></div>
<div class="a" style="left:488px;top:900px;width:927px;height:1px;background:#e5e8ed"></div>
<div class="a" style="left:675px;top:780px;width:1px;height:120px;background:#e5e8ed"></div>
<div class="a" style="left:835px;top:780px;width:1px;height:120px;background:#e5e8ed"></div>
<div class="a" style="left:995px;top:780px;width:1px;height:120px;background:#e5e8ed"></div>
<div class="a" style="left:1155px;top:780px;width:1px;height:120px;background:#e5e8ed"></div>
<div class="a nw" style="left:688.3px;top:834px;font-size:14.7px;line-height:14.7px;color:#2b3242;font-weight:400;letter-spacing:0px;">3 minutes</div>
</body></html>
